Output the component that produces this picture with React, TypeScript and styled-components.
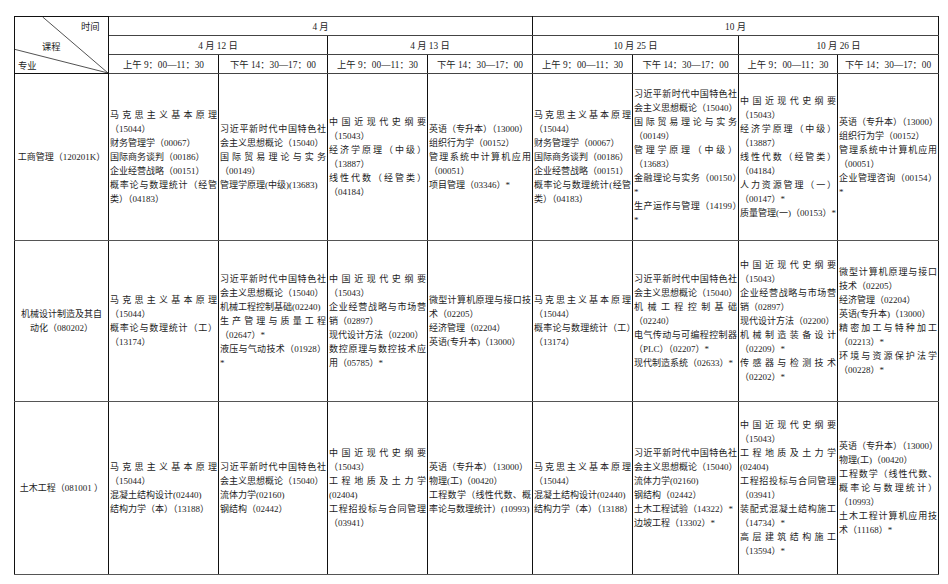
import React from 'react';
import styled, { createGlobalStyle } from 'styled-components';

const GlobalStyle = createGlobalStyle`
  html, body {
    margin: 0;
    padding: 0;
    background: #fff;
  }
`;

type Major = {
  name: string;
  cells: string[][];
};

const majors: Major[] = [
  {
    name: '工商管理（120201K）',
    cells: [
      ['马克思主义基本原理（15044）', '财务管理学（00067）', '国际商务谈判（00186）', '企业经营战略（00151）', '概率论与数理统计（经管类）（04183）'],
      ['习近平新时代中国特色社会主义思想概论（15040）', '国际贸易理论与实务（00149）', '管理学原理(中级)(13683)'],
      ['中国近现代史纲要（15043）', '经济学原理（中级）（13887）', '线性代数（经管类）（04184）'],
      ['英语（专升本）（13000）', '组织行为学（00152）', '管理系统中计算机应用（00051）', '项目管理（03346）*'],
      ['马克思主义基本原理（15044）', '财务管理学（00067）', '国际商务谈判（00186）', '企业经营战略（00151）', '概率论与数理统计(经管类）（04183）'],
      ['习近平新时代中国特色社会主义思想概论（15040）', '国际贸易理论与实务（00149）', '管理学原理（中级）（13683）', '金融理论与实务（00150）*', '生产运作与管理（14199）*'],
      ['中国近现代史纲要（15043）', '经济学原理（中级）（13887）', '线性代数（经管类）（04184）', '人力资源管理（一）（00147）*', '质量管理(一)（00153）*'],
      ['英语（专升本）（13000）', '组织行为学（00152）', '管理系统中计算机应用（00051）', '企业管理咨询（00154）*'],
    ],
  },
  {
    name: '机械设计制造及其自动化（080202）',
    cells: [
      ['马克思主义基本原理（15044）', '概率论与数理统计（工）（13174）'],
      ['习近平新时代中国特色社会主义思想概论（15040）', '机械工程控制基础(02240)', '生产管理与质量工程（02647）*', '液压与气动技术（01928）*'],
      ['中国近现代史纲要（15043）', '企业经营战略与市场营销（02897）', '现代设计方法（02200）', '数控原理与数控技术应用（05785）*'],
      ['微型计算机原理与接口技术（02205）', '经济管理（02204）', '英语(专升本)（13000）'],
      ['马克思主义基本原理（15044）', '概率论与数理统计（工）（13174）'],
      ['习近平新时代中国特色社会主义思想概论（15040）', '机械工程控制基础（02240）', '电气传动与可编程控制器（PLC）（02207）*', '现代制造系统（02633）*'],
      ['中国近现代史纲要（15043）', '企业经营战略与市场营销（02897）', '现代设计方法（02200）', '机械制造装备设计（02209）*', '传感器与检测技术（02202）*'],
      ['微型计算机原理与接口技术（02205）', '经济管理（02204）', '英语(专升本)（13000）', '精密加工与特种加工（02213）*', '环境与资源保护法学（00228）*'],
    ],
  },
  {
    name: '土木工程（081001 ）',
    cells: [
      ['马克思主义基本原理（15044）', '混凝土结构设计(02440)', '结构力学（本）（13188）'],
      ['习近平新时代中国特色社会主义思想概论（15040）', '流体力学(02160)', '钢结构（02442）'],
      ['中国近现代史纲要（15043）', '工程地质及土力学(02404)', '工程招投标与合同管理（03941）'],
      ['英语（专升本）（13000）', '物理(工)（00420）', '工程数学（线性代数、概率论与数理统计）(10993)'],
      ['马克思主义基本原理（15044）', '混凝土结构设计(02440)', '结构力学（本）（13188）'],
      ['习近平新时代中国特色社会主义思想概论（15040）', '流体力学(02160)', '钢结构（02442）', '土木工程试验（14322）*', '边坡工程（13302）*'],
      ['中国近现代史纲要（15043）', '工程地质及土力学(02404)', '工程招投标与合同管理（03941）', '装配式混凝土结构施工（14734）*', '高层建筑结构施工（13594）*'],
      ['英语（专升本）（13000）', '物理(工)（00420）', '工程数学（线性代数、概率论与数理统计）（10993）', '土木工程计算机应用技术（11168）*'],
    ],
  },
];

const colWidths = [94, 110, 109, 100, 105, 100, 106, 99, 101];
const rowHeights = [166, 160, 172];
const dates = ['4 月 12 日', '4 月 13 日', '10 月 25 日', '10 月 26 日'];

const Page = styled.div`
  padding: 16px 0 0 14px;
  font-family: 'Liberation Serif', 'Noto Sans CJK SC', serif;
  color: #1c1c1c;
`;

const Table = styled.table`
  border-collapse: collapse;
  table-layout: fixed;
  width: 924px;
  font-size: 9px;
`;

const HeadCell = styled.th`
  height: 18px;
  padding: 0;
  font-weight: normal;
  font-size: 9.3px;
  text-align: center;
  vertical-align: middle;
  border-left: 1px solid #111;
  border-right: 1px solid #111;
  border-top: 1px solid #444;
  border-bottom: 1px solid #444;
  white-space: nowrap;
`;

const CornerCell = styled.th`
  position: relative;
  padding: 0;
  border: 1px solid #111;
  font-weight: normal;
  font-size: 9.3px;
`;

const CornerLines = styled.svg`
  position: absolute;
  inset: 0;
  width: 100%;
  height: 100%;
`;

const CornerLabel = styled.span<{ $x: number; $y: number }>`
  position: absolute;
  left: ${(p) => p.$x}px;
  top: ${(p) => p.$y}px;
  white-space: nowrap;
`;

const NameCell = styled.td<{ $h: number }>`
  height: ${(p) => p.$h}px;
  padding: 0 2px;
  text-align: center;
  vertical-align: middle;
  line-height: 14px;
  border-left: 1px solid #111;
  border-right: 1px solid #111;
  border-top: 1px solid #555;
  border-bottom: 1px solid #555;
`;

const CourseCell = styled.td`
  padding: 0 1px;
  vertical-align: middle;
  border-left: 1px solid #111;
  border-right: 1px solid #111;
  border-top: 1px solid #555;
  border-bottom: 1px solid #555;
`;

const Course = styled.div`
  line-height: 14px;
  text-align: justify;
  text-align-last: left;
`;

export default function App() {
  return (
    <Page>
      <GlobalStyle />
      <Table>
        <colgroup>
          {colWidths.map((w, i) => (
            <col key={i} style={{ width: w }} />
          ))}
        </colgroup>
        <thead>
          <tr>
            <CornerCell rowSpan={3}>
              <CornerLines viewBox="0 0 94 57" preserveAspectRatio="none">
                <line x1="28" y1="0" x2="94" y2="57" stroke="#222" strokeWidth="0.8" />
                <line x1="0" y1="33" x2="94" y2="57" stroke="#222" strokeWidth="0.8" />
              </CornerLines>
              <CornerLabel $x={66} $y={2}>时间</CornerLabel>
              <CornerLabel $x={27} $y={22}>课程</CornerLabel>
              <CornerLabel $x={3} $y={41}>专业</CornerLabel>
            </CornerCell>
            <HeadCell colSpan={4}>4 月</HeadCell>
            <HeadCell colSpan={4}>10 月</HeadCell>
          </tr>
          <tr>
            {dates.map((d) => (
              <HeadCell key={d} colSpan={2}>
                {d}
              </HeadCell>
            ))}
          </tr>
          <tr>
            {dates.map((d) => (
              <React.Fragment key={d}>
                <HeadCell>上午 9：00—11：30</HeadCell>
                <HeadCell>下午 14：30—17：00</HeadCell>
              </React.Fragment>
            ))}
          </tr>
        </thead>
        <tbody>
          {majors.map((m, r) => (
            <tr key={m.name}>
              <NameCell $h={rowHeights[r]}>{m.name}</NameCell>
              {m.cells.map((courses, c) => (
                <CourseCell key={c}>
                  {courses.map((course, k) => (
                    <Course key={k}>{course}</Course>
                  ))}
                </CourseCell>
              ))}
            </tr>
          ))}
        </tbody>
      </Table>
    </Page>
  );
}
